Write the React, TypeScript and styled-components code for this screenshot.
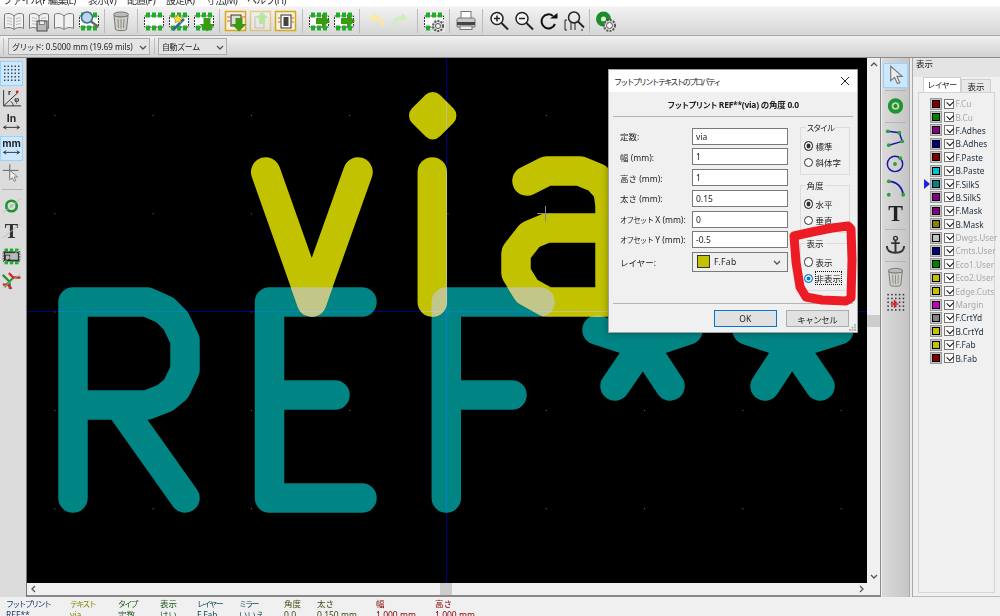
import React from 'react'
import styled, { createGlobalStyle } from 'styled-components'

const FONT = `"Noto Sans", "Noto Sans CJK JP", sans-serif`

const GlobalStyle = createGlobalStyle`
  html, body {
    margin: 0;
    padding: 0;
    background: #f0f0f0;
  }
  * {
    box-sizing: border-box;
  }
`

const Page = styled.div`
  width: 1000px;
  height: 616px;
  overflow: hidden;
  display: flex;
  flex-direction: column;
  font-family: ${FONT};
  color: #222;
  background: #f0f0f0;
`

const Kana = styled.span<{ $size?: number; $track?: number }>`
  font-size: ${p => p.$size ?? 7.5}px;
  letter-spacing: ${p => p.$track ?? -0.9}px;
`

const MenuBar = styled.div`
  height: 6px;
  flex: none;
  overflow: hidden;
  display: flex;
  align-items: flex-end;
  background: #fff;
`

const MenuItem = styled.div<{ $width: number }>`
  width: ${p => p.$width}px;
  flex: none;
  font-size: 10px;
  line-height: 14px;
  letter-spacing: -0.8px;
  color: #333;
  padding-left: 3px;
  margin-bottom: -1px;
  white-space: nowrap;
  overflow: hidden;
`

const MainToolbar = styled.div`
  height: 30px;
  flex: none;
  display: flex;
  align-items: center;
  padding-left: 1px;
  border-top: 1px solid #f8f8f8;
  border-bottom: 1px solid #a8a8a8;
  background: linear-gradient(#f2f2f2, #d6d6d6);
`

const ToolSlot = styled.div`
  width: 25px;
  height: 24px;
  flex: none;
  display: flex;
  align-items: center;
  justify-content: center;
`

const ToolGap = styled.div`
  width: 7.5px;
  height: 24px;
  flex: none;
  display: flex;
  justify-content: center;

  &::after {
    content: '';
    width: 1px;
    background: #bcbcbc;
  }
`

const SelectBar = styled.div`
  height: 22px;
  flex: none;
  display: flex;
  align-items: center;
  padding-left: 3px;
  border-bottom: 1px solid #8c8c8c;
  background: linear-gradient(#f0f0f0, #d2d2d2);
`

const BarGrip = styled.div<{ $margin: number }>`
  width: 1px;
  height: 17px;
  flex: none;
  margin: 0 ${p => p.$margin}px 0 0;
  background: #bdbdbd;
`

const Combo = styled.div<{ $width: number }>`
  width: ${p => p.$width}px;
  height: 17px;
  flex: none;
  display: flex;
  align-items: center;
  justify-content: space-between;
  padding: 0 2px 0 3px;
  margin-right: 4px;
  border: 1px solid #adadad;
  background: #e4e4e4;
  font-size: 8px;
  white-space: nowrap;
  color: #222;
`

const Main = styled.div`
  flex: 1;
  min-height: 0;
  display: flex;
`

const LeftBar = styled.div`
  width: 27px;
  flex: none;
  display: flex;
  flex-direction: column;
  padding-top: 2.5px;
  border-right: 1px solid #777;
  background: #dcdcdc;
`

const VTool = styled.div<{ $active?: boolean; $wide?: boolean }>`
  width: ${p => (p.$wide ? 25 : 23)}px;
  height: 25px;
  flex: none;
  display: flex;
  align-items: center;
  justify-content: center;
  border: 1px solid ${p => (p.$active ? '#99d1ff' : 'transparent')};
  background: ${p => (p.$active ? '#cce8ff' : 'transparent')};
`

const VGap = styled.div<{ $height: number }>`
  height: ${p => p.$height}px;
  width: 21px;
  margin-left: 2px;
  flex: none;
  display: flex;
  align-items: center;

  &::after {
    content: '';
    width: 100%;
    height: 1px;
    background: #b4b4b4;
  }
`

const CanvasColumn = styled.div`
  width: 854px;
  flex: none;
  display: flex;
  flex-direction: column;
  border-right: 1px solid #888;
  border-bottom: 2px solid #888;
  background: #f0f0f0;
`

const CanvasRow = styled.div`
  height: 525px;
  flex: none;
  display: flex;
`

const CanvasArea = styled.div`
  position: relative;
  width: 840px;
  height: 525px;
  flex: none;
  background: #000;
`

const Board = styled.svg`
  display: block;
  width: 840px;
  height: 525px;
`

const Axis = styled.path`
  stroke: #000084;
  stroke-width: 1;
  fill: none;
  mix-blend-mode: screen;
`

const VScroll = styled.div`
  flex: 1;
  display: flex;
  flex-direction: column;
  align-items: center;
  justify-content: space-between;
  padding: 3px 0;
  position: relative;
  font-size: 0;
`

const VThumb = styled.div`
  position: absolute;
  left: 0;
  right: 0;
  top: 257px;
  height: 12px;
  background: #cdcdcd;
`

const HScroll = styled.div`
  position: relative;
  height: 12px;
  flex: none;
  display: flex;
  align-items: center;
  justify-content: space-between;
  padding: 0 15px 0 3px;
`

const HThumb = styled.div`
  position: absolute;
  left: 413px;
  top: 0;
  bottom: 0;
  width: 12px;
  background: #cdcdcd;
`

const RightBar = styled.div`
  width: 27px;
  margin-left: 1px;
  flex: none;
  display: flex;
  flex-direction: column;
  padding: 4.5px 0 0 1px;
  background: linear-gradient(90deg, #dadada, #c6c6c6);
`

const Sash = styled.div`
  width: 4px;
  flex: none;
  border-left: 1px solid #a8a8a8;
  border-right: 1px solid #a8a8a8;
  background: #ececec;
`

const LayerPanel = styled.div`
  flex: 1;
  min-width: 0;
  display: flex;
  flex-direction: column;
  background: #f0f0f0;
  border-bottom: 1px solid #bbb;
`

const PanelTitle = styled.div`
  height: 19px;
  flex: none;
  padding-left: 3px;
  font-size: 8.5px;
  line-height: 11px;
  background: #e4e4e4;
`

const TabRow = styled.div`
  height: 15px;
  flex: none;
  display: flex;
  align-items: flex-end;
  padding-left: 10px;
`

const Tab = styled.div<{ $active?: boolean }>`
  width: ${p => (p.$active ? 38 : 30)}px;
  height: ${p => (p.$active ? 15 : 13)}px;
  flex: none;
  font-size: 8.5px;
  line-height: 13px;
  text-align: center;
  border: 1px solid #d0d0d0;
  border-bottom: none;
  background: ${p => (p.$active ? '#fff' : '#e8e8e8')};
`

const TabBody = styled.div`
  flex: 1;
  margin: 0 5px 3px 5px;
  padding: 4px 0 0 11px;
  border: 1px solid #d4d4d4;
  display: flex;
  flex-direction: column;
`

const LayerRow = styled.div`
  position: relative;
  height: 13.4px;
  flex: none;
  display: flex;
  align-items: center;
`

const Marker = styled.div`
  position: absolute;
  left: -6px;
  top: 2px;
  width: 0;
  height: 0;
  border-top: 5px solid transparent;
  border-bottom: 5px solid transparent;
  border-left: 6px solid #2020e8;
`

const Swatch = styled.div<{ $color: string }>`
  width: 12px;
  height: 12px;
  flex: none;
  border: 2px solid #c4c4c4;
  background: ${p => p.$color};
  outline: 1px solid #9a9a9a;
  outline-offset: -1px;
  box-shadow: inset 0 0 0 1px #000;
`

const Check = styled.div`
  position: relative;
  width: 10px;
  height: 10px;
  flex: none;
  margin-left: 2px;
  border: 1px solid #777;
  background: #fff;

  &::after {
    content: '';
    position: absolute;
    left: 1.5px;
    top: 0.5px;
    width: 5px;
    height: 3.5px;
    border-left: 1px solid #111;
    border-bottom: 1px solid #111;
    transform: rotate(-45deg);
  }
`

const LayerName = styled.div<{ $muted: boolean }>`
  margin-left: 1.5px;
  font-size: 8.3px;
  white-space: nowrap;
  color: ${p => (p.$muted ? '#a8a8a8' : '#1c2c3c')};
`

const StatusBar = styled.div`
  height: 19px;
  flex: none;
  overflow: hidden;
  display: flex;
  padding: 2px 0 0 6px;
  background: #f0f0f0;
`

const StatusColumn = styled.div<{ $width: number; $color: string }>`
  width: ${p => p.$width}px;
  flex: none;
  font-size: 8.5px;
  line-height: 10.5px;
  white-space: nowrap;
  color: ${p => p.$color};
`

const Dialog = styled.div`
  position: absolute;
  left: 581px;
  top: 11px;
  width: 250px;
  height: 264px;
  display: flex;
  flex-direction: column;
  border: 1px solid #a0a0a0;
  background: #f0f0f0;
  box-shadow: 0 0 7px rgba(0, 0, 0, 0.35);
  font-size: 8.5px;
`

const TitleBar = styled.div`
  height: 22px;
  flex: none;
  display: flex;
  align-items: center;
  justify-content: space-between;
  padding: 0 7px 0 5px;
  background: #fff;
  font-size: 8.5px;
`

const Subtitle = styled.div`
  height: 24px;
  flex: none;
  display: flex;
  align-items: center;
  justify-content: center;
  font-size: 8.5px;
  letter-spacing: -0.25px;
  font-weight: 700;
`

const Rule = styled.div`
  height: 1px;
  flex: none;
  margin: 0 4px;
  background: #b4b4b4;
`

const DialogBody = styled.div`
  flex: 1;
  display: flex;
  padding: 5px 0 0 11px;
`

const FieldGrid = styled.div`
  width: 168px;
  flex: none;
  margin-top: 5.7px;
  display: grid;
  grid-template-columns: 72px 96px;
  grid-auto-rows: min-content;
  row-gap: 3.75px;
  align-items: center;
`

const FieldLabel = styled.div`
  white-space: nowrap;
  color: #222;
`

const Field = styled.div`
  height: 17px;
  display: flex;
  align-items: center;
  padding-left: 3px;
  border: 1px solid #7a7a7a;
  background: #fff;
  font-size: 8.5px;
`

const LayerSelect = styled.div`
  height: 19.5px;
  display: flex;
  align-items: center;
  justify-content: space-between;
  padding: 0 6px 0 4px;
  border: 1px solid #7a7a7a;
  background: #efefef;
`

const LayerChip = styled.span`
  display: flex;
  align-items: center;
  gap: 4px;
  letter-spacing: 0.4px;

  &::before {
    content: '';
    width: 11px;
    height: 11px;
    border: 1px solid #333;
    background: #c2c200;
  }
`

const GroupColumn = styled.div`
  width: 50px;
  margin-left: 11.5px;
  display: flex;
  flex-direction: column;
  gap: 5px;
`

const Group = styled.fieldset`
  height: 53px;
  margin: 0;
  padding: 4.6px 0 0 3px;
  min-width: 0;
  border: 1px solid #dcdcdc;
`

const GroupTitle = styled.legend`
  margin-left: 2px;
  padding: 0 1px;
  font-size: 8.5px;
  line-height: 11px;
`

const RadioRow = styled.div`
  height: 16.5px;
  display: flex;
  align-items: center;
  gap: 2.5px;
`

const RadioDot = styled.span<{ $checked?: boolean; $focus?: boolean }>`
  width: 9.5px;
  height: 9.5px;
  flex: none;
  border-radius: 50%;
  border: 1px solid ${p => (p.$focus ? '#0078d7' : '#333')};
  background: ${p => (p.$focus ? '#0078d7' : p.$checked ? '#333' : '#fff')};
  box-shadow: inset 0 0 0 1.5px #fff;
`

const RadioText = styled.span<{ $focus?: boolean }>`
  white-space: nowrap;
  outline: ${p => (p.$focus ? '1px dotted #111' : 'none')};
`

const DialogFooter = styled.div`
  flex: none;
  display: flex;
  flex-direction: column;
`

const ButtonRow = styled.div`
  position: relative;
  display: flex;
  justify-content: flex-end;
  gap: 8.5px;
  padding: 6px 8px 5px 0;
`

const DialogButton = styled.div<{ $primary?: boolean }>`
  width: 63.5px;
  height: 17px;
  display: flex;
  align-items: center;
  justify-content: center;
  border: ${p => (p.$primary ? '1.5px solid #0078d7' : '1px solid #adadad')};
  background: #e1e1e1;
  font-size: 8.5px;
`

const Grip = styled.svg`
  position: absolute;
  right: 1px;
  bottom: 1px;
`

const Scribble = styled.svg`
  position: absolute;
  left: 0;
  top: 0;
  width: 840px;
  height: 525px;
  pointer-events: none;
`

const Chevron = ({ dir = 'down', size = 8, color = '#555', w = 1.3 }: { dir?: 'down' | 'up' | 'left' | 'right'; size?: number; color?: string; w?: number }) => {
  const paths = {
    down: 'M1 3l3 3 3-3',
    up: 'M1 5l3-3 3 3',
    left: 'M5 1L2 4l3 3',
    right: 'M3 1l3 3-3 3',
  }
  return (
    <svg width={size} height={size} viewBox="0 0 8 8" fill="none">
      <path d={paths[dir]} stroke={color} strokeWidth={w} />
    </svg>
  )
}

const Icon = ({ children }: { children: React.ReactNode }) => (
  <svg width="24" height="24" viewBox="0 0 24 24" fill="none">
    {children}
  </svg>
)

const ChipArt = ({ faded }: { faded?: boolean }) => (
  <g opacity={faded ? 0.35 : 1}>
    <rect x="2.5" y="7" width="19" height="11" fill="#fff" stroke="#333" strokeDasharray="2 1" />
    {[4, 10, 16].map(x => (
      <React.Fragment key={x}>
        <rect x={x} y="3.5" width="4" height="5" fill="#1fae2a" />
        <rect x={x} y="16.5" width="4" height="5" fill="#1fae2a" />
      </React.Fragment>
    ))}
  </g>
)

const ArrowDown = ({ faded }: { faded?: boolean }) => (
  <path d="M9.5 9h7v6h4l-7.5 7.5L5.5 15h4z" transform="translate(2 0)" fill={faded ? '#b6e6a0' : '#3c9a12'} />
)

const ArrowRight = () => <path d="M9 9h6V4.500l8 7.500-8 7.500V15H9z" fill="#3c9a12" />

const YellowFrame = () => <rect x="1.500" y="2.500" width="20" height="19" fill="#f6f0e0" stroke="#d8a818" strokeWidth="1.500" />

const Gear = ({ x = 16, y = 17, r = 5 }: { x?: number; y?: number; r?: number }) => (
  <g>
    <circle cx={x} cy={y} r={r} fill="#ddd" stroke="#555" strokeWidth="2" strokeDasharray="2 1.200" />
    <circle cx={x} cy={y} r={r - 2.500} fill="#f4f4f4" stroke="#555" />
  </g>
)

const BookArt = ({ lines = true }: { lines?: boolean }) => (
  <g>
    <path d="M12 7C9 4 5 4 2.500 5.500v14c2.500-1.500 6.500-1.500 9.500 1 3-2.500 7-2.500 9.500-1v-14C19 4 15 4 12 7z" fill="#f1f1f1" stroke="#777" />
    <path d="M12 7v13.500" stroke="#777" />
    {lines && <path d="M5 9c2-.5 3.500 0 5 1M5 12c2-.5 3.500 0 5 1M5 15c2-.5 3.500 0 5 1M14 10c1.500-1 3-1.500 5-1M14 13c1.500-1 3-1.500 5-1M14 16c1.500-1 3-1.500 5-1" stroke="#b4b4b4" />}
  </g>
)

const TrashArt = () => (
  <g>
    <ellipse cx="12" cy="5.500" rx="7.500" ry="2.500" fill="#bbb" stroke="#777" />
    <path d="M5 6.500l1.500 14c1 1.500 10 1.500 11 0L19 6.500c-2 2-12 2-14 0z" fill="#cfcfc8" stroke="#777" />
    <path d="M9 10l.5 9M12 10v9.500M15 10l-.5 9" stroke="#8b8b84" />
  </g>
)

const MagnifierArt = ({ sign }: { sign: 'plus' | 'minus' }) => (
  <g stroke="#222">
    <circle cx="10" cy="9.500" r="6" strokeWidth="1.500" fill="#f4f4f4" />
    <path d="M14.500 14l6.500 6.500" strokeWidth="2" />
    <path d={sign === 'plus' ? 'M7 9.500h6M10 6.500v6' : 'M7 9.500h6'} strokeWidth="1.500" />
  </g>
)

const topTools: (React.ReactNode | null)[] = [
  <Icon><BookArt /></Icon>,
  <Icon>
    <BookArt />
    <rect x="10" y="12" width="10" height="10" fill="#bbb" stroke="#444" />
    <rect x="12.500" y="12" width="5" height="3.500" fill="#eee" stroke="#444" strokeWidth=".6" />
  </Icon>,
  <Icon><BookArt lines={false} /></Icon>,
  <Icon>
    <ChipArt />
    <circle cx="10" cy="8.500" r="5.500" fill="#bcd8ee" stroke="#3a6a94" strokeWidth="1.500" />
    <path d="M14 12.500l7 5" stroke="#666" strokeWidth="2.200" />
  </Icon>,
  null,
  <Icon><TrashArt /></Icon>,
  null,
  <Icon><ChipArt /></Icon>,
  <Icon>
    <ChipArt />
    <path d="M6 21L17 10" stroke="#35689c" strokeWidth="2.500" />
    <path d="M11 5l1.500 3 3 .5-2 2.500.5 3-3-1.500-3 1.500.5-3-2-2.500 3-.5z" fill="#f4e23a" stroke="#a08a10" strokeWidth=".6" />
  </Icon>,
  <Icon><ChipArt /><ArrowDown /></Icon>,
  null,
  <Icon><YellowFrame /><rect x="7" y="6" width="10" height="11" fill="#ddd" stroke="#333" /><path d="M3 8h4M3 12h4M17 8h4" stroke="#d06a20" /><ArrowDown /></Icon>,
  <Icon><g opacity=".45"><YellowFrame /><rect x="6" y="8" width="9" height="11" fill="#eee" stroke="#999" /></g><path d="M13 3l6 6h-3v6h-6V9H7z" fill="#b6e6a0" /></Icon>,
  <Icon><YellowFrame /><rect x="7" y="6" width="10" height="13" fill="#fff" stroke="#333" /><rect x="9.500" y="8" width="5" height="9" fill="#444" /><path d="M4 9h3M4 13h3M17 9h3M17 13h3" stroke="#d06a20" /></Icon>,
  null,
  <Icon><ChipArt /><ArrowRight /></Icon>,
  <Icon><ChipArt /><ArrowRight /></Icon>,
  null,
  <Icon><path d="M18 17c0-4-3-6.500-7-6.500V14L4.500 8.500 11 3v3.500c6 0 10 4 10 10.500l-1.500 3z" transform="matrix(.9 0 0 .9 1 1)" fill="#fbe9a0" /></Icon>,
  <Icon><path d="M6 17c0-4 3-6.500 7-6.500V14l6.500-5.500L13 3v3.500C7 6.500 3 10.500 3 17l1.500 3z" transform="matrix(.9 0 0 .9 1 1)" fill="#cdeec0" /></Icon>,
  null,
  <Icon><ChipArt /><rect x="10" y="10" width="13" height="13" fill="#eee" opacity=".7" /><Gear /></Icon>,
  null,
  <Icon>
    <rect x="7" y="2.500" width="10" height="7" fill="#fff" stroke="#777" />
    <path d="M3 10.500c0-1 1-1.500 2-1.500h14c1 0 2 .5 2 1.500V18H3z" fill="#c9c9c9" stroke="#777" />
    <rect x="3" y="13" width="18" height="3" fill="#444" />
    <rect x="6" y="17" width="12" height="3.500" fill="#eee" stroke="#777" />
  </Icon>,
  null,
  <Icon><MagnifierArt sign="plus" /></Icon>,
  <Icon><MagnifierArt sign="minus" /></Icon>,
  <Icon>
    <path d="M18 15a7 7 0 1 1-2-8" stroke="#111" strokeWidth="2" />
    <path d="M13 9.500h7.500V4z" fill="#111" />
  </Icon>,
  <Icon>
    <path d="M5 11H3v10h2M19 21h2" stroke="#222" />
    <circle cx="12" cy="8.500" r="5.500" stroke="#222" strokeWidth="1.500" />
    <path d="M9 13v8M13 13v8" stroke="#222" />
    <path d="M16 12.500l6 6" stroke="#222" strokeWidth="1.800" />
  </Icon>,
  null,
  <Icon>
    <circle cx="9.500" cy="10" r="7.500" fill="#1d8c2c" />
    <circle cx="9.500" cy="10" r="2.500" fill="#d8f0d0" />
    <Gear x={15.500} y={16.500} r={5.500} />
  </Icon>,
]

const GridDots = ({ marked }: { marked?: boolean }) => (
  <Icon>
    {[0, 1, 2, 3, 4].map(r =>
      [0, 1, 2, 3, 4].map(c => (
        <rect key={`${r}-${c}`} x={3.500 + c * 4} y={3.500 + r * 4} width="1.600" height="1.600" fill="#333" />
      )),
    )}
    {marked && <path d="M7 14h8M11 10v8" stroke="#e01818" strokeWidth="1.600" />}
  </Icon>
)

const UnitIcon = ({ label, size }: { label: string; size: number }) => (
  <Icon>
    <text x="12" y="11" textAnchor="middle" fontFamily='"Liberation Sans", sans-serif' fontWeight="700" fontSize={size} fill="#222">{label}</text>
    <path d="M3 17h18M3 17l3-2M3 17l3 2M21 17l-3-2M21 17l-3 2" stroke="#222" />
  </Icon>
)

const Hatch = () => <path d="M2 20L22 4" stroke="#bbb" strokeWidth="1" />

const ViaArt = ({ hatch }: { hatch?: boolean }) => (
  <>
    <circle cx="12" cy="12" r="6" stroke="#1d9430" strokeWidth={hatch ? 3 : 4} fill={hatch ? 'none' : '#b8d8b0'} />
    <circle cx="12" cy="12" r="2" fill={hatch ? '#9ccf9c' : '#208830'} />
  </>
)

const BigT = ({ color = '#222' }: { color?: string }) => (
  <text x="12" y="20" textAnchor="middle" fontFamily='"Liberation Serif", serif' fontWeight="700" fontSize="23" fill={color}>T</text>
)

const leftTools: { art: React.ReactNode; active?: boolean }[] = [
  { art: <GridDots />, active: true },
  {
    art: (
      <Icon>
        <path d="M3 3v18h20M3 21L19 6M14 21c0-2-1-4-3-5" stroke="#222" />
        <circle cx="18.500" cy="5" r="1.600" fill="#e01818" />
        <text x="8" y="9" fontFamily='"Liberation Sans", sans-serif' fontWeight="700" fontSize="9" fill="#222">r</text>
        <text x="15" y="17" fontFamily='"Liberation Serif", serif' fontWeight="700" fontSize="9" fill="#222">φ</text>
      </Icon>
    ),
  },
  { art: <UnitIcon label="In" size={12} /> },
  { art: <UnitIcon label="mm" size={12} />, active: true },
  {
    art: (
      <Icon>
        <path d="M2 9h18M10 2v16" stroke="#555" />
        <path d="M10 9v11l3-2.500 2 4 2-1-2-4h4z" fill="#eee" stroke="#777" />
      </Icon>
    ),
  },
]

const leftTools2: React.ReactNode[] = [
  <Icon><ViaArt hatch /><Hatch /></Icon>,
  <Icon><BigT color="#333" /><Hatch /></Icon>,
  <Icon>
    <ChipArt />
    <rect x="4" y="8" width="16" height="9" fill="#bbb" stroke="#333" strokeWidth="1.500" />
    <rect x="5" y="11" width="5" height="5" fill="none" stroke="#333" />
    <Hatch />
  </Icon>,
  <Icon>
    <path d="M2 5l8 8v8M22 8h-8L4 19" stroke="#1d9430" strokeWidth="2.500" />
    <path d="M9 3l5 5h8M2 16h6l4 5" stroke="#d82020" strokeWidth="2.500" />
    <Hatch />
  </Icon>,
]

const NodeDot = ({ cx, cy }: { cx: number; cy: number }) => <circle cx={cx} cy={cy} r="2" fill="#2f9e3c" />

const rightGroups: { art: React.ReactNode; active?: boolean }[][] = [
  [
    {
      active: true,
      art: (
        <Icon>
          <path d="M7 3v15l4-3.500 3 6.500 2.500-1-3-6.500h5.500z" fill="#eee" stroke="#777" strokeWidth="1.200" />
        </Icon>
      ),
    },
  ],
  [{ art: <Icon><ViaArt /></Icon> }],
  [
    {
      art: (
        <Icon>
          <path d="M4 5l12 1.500 3 9-14 4" stroke="#1414a8" strokeWidth="1.500" />
          <NodeDot cx={4} cy={5} /><NodeDot cx={16} cy={6.500} /><NodeDot cx={19} cy={15.500} /><NodeDot cx={5} cy={19.500} />
        </Icon>
      ),
    },
    {
      art: (
        <Icon>
          <circle cx="11.500" cy="13" r="8" stroke="#1414a8" strokeWidth="1.500" />
          <NodeDot cx={11.500} cy={13} /><NodeDot cx={17} cy={7} />
        </Icon>
      ),
    },
    {
      art: (
        <Icon>
          <path d="M5 5c8 0 14 6 15 14" stroke="#1414a8" strokeWidth="1.800" />
          <NodeDot cx={5} cy={5} /><NodeDot cx={5} cy={19} /><NodeDot cx={20} cy={19} />
        </Icon>
      ),
    },
    { art: <Icon><BigT /></Icon> },
  ],
  [
    {
      art: (
        <Icon>
          <circle cx="12" cy="5" r="2" stroke="#333" strokeWidth="1.500" />
          <path d="M12 7v13M7.500 10h9M3 13c0 5 4 7 9 7s9-2 9-7" stroke="#333" strokeWidth="2" />
        </Icon>
      ),
    },
  ],
  [
    { art: <Icon><TrashArt /></Icon> },
    { art: <GridDots marked /> },
  ],
]

const layers: { name: string; color: string; muted: boolean; current?: boolean }[] = [
  { name: 'F.Cu', color: '#840000', muted: true },
  { name: 'B.Cu', color: '#008400', muted: true },
  { name: 'F.Adhes', color: '#840084', muted: false },
  { name: 'B.Adhes', color: '#000084', muted: false },
  { name: 'F.Paste', color: '#840000', muted: false },
  { name: 'B.Paste', color: '#00c2c2', muted: false },
  { name: 'F.SilkS', color: '#008484', muted: false, current: true },
  { name: 'B.SilkS', color: '#840084', muted: false },
  { name: 'F.Mask', color: '#840084', muted: false },
  { name: 'B.Mask', color: '#848400', muted: false },
  { name: 'Dwgs.User', color: '#c2c2c2', muted: true },
  { name: 'Cmts.User', color: '#000084', muted: true },
  { name: 'Eco1.User', color: '#008400', muted: true },
  { name: 'Eco2.User', color: '#c2c200', muted: true },
  { name: 'Edge.Cuts', color: '#c2c200', muted: true },
  { name: 'Margin', color: '#c200c2', muted: true },
  { name: 'F.CrtYd', color: '#848484', muted: false },
  { name: 'B.CrtYd', color: '#c2c200', muted: false },
  { name: 'F.Fab', color: '#c2c200', muted: false },
  { name: 'B.Fab', color: '#840000', muted: false },
]

const statusColumns = [
  { title: 'フットプリント', value: 'REF**', width: 64, color: '#1a3a6a', kana: true },
  { title: 'テキスト', value: 'via', width: 48, color: '#848400', kana: true },
  { title: 'タイプ', value: '定数', width: 42, color: '#1a5a1a', kana: true },
  { title: '表示', value: 'はい', width: 37, color: '#1a5a1a' },
  { title: 'レイヤー', value: 'F.Fab', width: 42, color: '#0a4a5a', kana: true },
  { title: 'ミラー', value: 'いいえ', width: 45, color: '#0a4a5a', kana: true },
  { title: '角度', value: '0.0', width: 33, color: '#3a4a10' },
  { title: '太さ', value: '0.150 mm', width: 59, color: '#3a4a10' },
  { title: '幅', value: '1.000 mm', width: 59, color: '#840000' },
  { title: '高さ', value: '1.000 mm', width: 70, color: '#840000' },
]

const menus = [
  { label: 'ファイル(F)', width: 45 },
  { label: '編集(E)', width: 40 },
  { label: '表示(V)', width: 39 },
  { label: '配置(P)', width: 39 },
  { label: '設定(R)', width: 40 },
  { label: '寸法(M)', width: 41 },
  { label: 'ヘルプ(H)', width: 50 },
]

const fields: [React.ReactNode, string][] = [
  ['定数:', 'via'],
  ['幅 (mm):', '1'],
  ['高さ (mm):', '1'],
  ['太さ (mm):', '0.15'],
  [<><Kana>オフセット</Kana> X (mm):</>, '0'],
  [<><Kana>オフセット</Kana> Y (mm):</>, '-0.5'],
]

const groups: { title: React.ReactNode; key: string; options: { label: React.ReactNode; key: string; checked?: boolean; focus?: boolean }[] }[] = [
  { key: 'style', title: <Kana $size={8} $track={-1.2}>スタイル</Kana>, options: [{ key: 'a', label: '標準', checked: true }, { key: 'b', label: '斜体字' }] },
  { key: 'angle', title: '角度', options: [{ key: 'a', label: '水平', checked: true }, { key: 'b', label: '垂直' }] },
  { key: 'show', title: '表示', options: [{ key: 'a', label: '表示' }, { key: 'b', label: '非表示', focus: true }] },
]

const TEAL_PATHS = [
  'M73 498V302H147L165 310L176 321L185 340V370L176 389L165 398L147 405H73M119 405L185 498',
  'M362 302H269.500V498H362M269.500 395H335',
  'M540 302H446.300V498M446.300 395H512',
  'M643 345L597 330M643 345L615 386M643 345L670 386M643 345L688 330M643 345V300',
  'M792 345L747 330M792 345L765 386M792 345L820 386M792 345L839 330M792 345V300',
]

const YELLOW_PATHS = [
  'M265.700 172L311.700 302L358 172',
  'M432.300 172V302',
  'M527 181L546.700 171H580L597 178L608 190L610 205V302H546.700L527 291L516 273V253L530 235L546.700 228H610',
]

const gridX = [54.3, 152.6, 250.9, 349.2, 447.5, 545.8, 644.1, 742.4, 840.7]
const gridY = [115, 213.3, 311.6, 409.9, 508.2]

const App: React.FunctionComponent = () => {
  return (
    <Page>
      <GlobalStyle />
      <MenuBar>
        {menus.map(m => (
          <MenuItem key={m.label} $width={m.width}>{m.label}</MenuItem>
        ))}
      </MenuBar>
      <MainToolbar>
        {topTools.map((tool, i) =>
          tool ? <ToolSlot key={i}>{tool}</ToolSlot> : <ToolGap key={i} />,
        )}
      </MainToolbar>
      <SelectBar>
        <BarGrip $margin={4} />
        <Combo $width={142}>
          <span><Kana $size={8} $track={-0.6}>グリッド</Kana>: 0.5000 mm (19.69 mils)</span>
          <Chevron />
        </Combo>
        <BarGrip $margin={3} />
        <Combo $width={69}>
          <Kana $size={8} $track={-0.4}>自動ズーム</Kana>
          <Chevron />
        </Combo>
      </SelectBar>
      <Main>
        <LeftBar>
          {leftTools.map((t, i) => (
            <VTool key={i} $active={t.active}>{t.art}</VTool>
          ))}
          <VGap $height={8} />
          {leftTools2.map((art, i) => (
            <VTool key={i}>{art}</VTool>
          ))}
        </LeftBar>
        <CanvasColumn>
          <CanvasRow>
            <CanvasArea>
              <Board viewBox="27 58 840 525">
                <defs>
                  <mask id="tealMask" maskUnits="userSpaceOnUse" x="27" y="58" width="840" height="525">
                    {TEAL_PATHS.map(d => (
                      <path key={d} d={d} fill="none" stroke="#fff" strokeWidth="29.500" strokeLinecap="round" strokeLinejoin="round" />
                    ))}
                  </mask>
                </defs>
                {gridY.map(y =>
                  gridX.map(x => <rect key={`${x}-${y}`} x={x} y={y} width="1" height="1" fill="#6e6e6e" />),
                )}
                <g fill="none" stroke="#008484" strokeWidth="29.500" strokeLinecap="round" strokeLinejoin="round">
                  {TEAL_PATHS.map(d => <path key={d} d={d} />)}
                </g>
                <g fill="none" stroke="#c2c200" strokeWidth="29.500" strokeLinecap="round" strokeLinejoin="round">
                  {YELLOW_PATHS.map(d => <path key={d} d={d} />)}
                </g>
                <path d="M432.700 102.400L446 115.700L432.700 129L419.400 115.700Z" fill="#c2c200" stroke="#c2c200" strokeWidth="20.800" strokeLinejoin="round" />
                <g mask="url(#tealMask)" fill="none" stroke="#c2c688" strokeWidth="29.500" strokeLinecap="round" strokeLinejoin="round">
                  {YELLOW_PATHS.map(d => <path key={d} d={d} />)}
                </g>
                <Axis d="M446.500 58V583M27 311.500H867" />
                <path d="M537 213.500H553M545.500 206V222" stroke="#8a8a8a" strokeWidth="1" />
              </Board>
              <Dialog>
                <TitleBar>
                  <Kana $size={8} $track={-1.75}>フットプリント テキストのプロパティ</Kana>
                  <svg width="10" height="10" viewBox="0 0 10 10">
                    <path d="M1 1l8 8M9 1l-8 8" stroke="#222" />
                  </svg>
                </TitleBar>
                <Subtitle><span><Kana $size={8} $track={-0.9}>フットプリント</Kana> REF**(via) の角度 0.0</span></Subtitle>
                <Rule />
                <DialogBody>
                  <FieldGrid>
                    {fields.map(([label, value], i) => (
                      <React.Fragment key={i}>
                        <FieldLabel>{label}</FieldLabel>
                        <Field>{value}</Field>
                      </React.Fragment>
                    ))}
                    <FieldLabel>レイヤー:</FieldLabel>
                    <LayerSelect>
                      <LayerChip>F.Fab</LayerChip>
                      <Chevron />
                    </LayerSelect>
                  </FieldGrid>
                  <GroupColumn>
                    {groups.map(g => (
                      <Group key={g.key}>
                        <GroupTitle>{g.title}</GroupTitle>
                        {g.options.map(o => (
                          <RadioRow key={o.key}>
                            <RadioDot $checked={o.checked} $focus={o.focus} />
                            <RadioText $focus={o.focus}>{o.label}</RadioText>
                          </RadioRow>
                        ))}
                      </Group>
                    ))}
                  </GroupColumn>
                </DialogBody>
                <DialogFooter>
                  <Rule />
                  <ButtonRow>
                    <DialogButton $primary>OK</DialogButton>
                    <DialogButton><Kana $size={8.5} $track={-0.5}>キャンセル</Kana></DialogButton>
                    <Grip width="7" height="7" viewBox="0 0 7 7">
                      <path d="M5 0h2v2H5zM2.500 2.500h2v2h-2zM5 2.500h2v2H5zM0 5h2v2H0zM2.500 5h2v2h-2zM5 5h2v2H5z" fill="#b8b8b8" />
                    </Grip>
                  </ButtonRow>
                </DialogFooter>
              </Dialog>
              <Scribble viewBox="27 58 840 525">
                <path
                  d="M794 236L812 232L832 228L848 226L851 229L852 260L851 298L846 301L822 300L806 297L800 287L796 262L794 236"
                  fill="none"
                  stroke="#ed1c24"
                  strokeWidth="9"
                  strokeLinecap="round"
                  strokeLinejoin="round"
                />
              </Scribble>
            </CanvasArea>
            <VScroll>
              <VThumb />
              <Chevron dir="up" />
              <Chevron dir="down" />
            </VScroll>
          </CanvasRow>
          <HScroll>
            <HThumb />
            <Chevron dir="left" />
            <Chevron dir="right" />
          </HScroll>
        </CanvasColumn>
        <RightBar>
          {rightGroups.map((group, i) => (
            <React.Fragment key={i}>
              {i > 0 && <VGap $height={i === 1 ? 6 : 7} />}
              {group.map((t, j) => (
                <VTool key={j} $active={t.active} $wide>{t.art}</VTool>
              ))}
            </React.Fragment>
          ))}
        </RightBar>
        <Sash />
        <LayerPanel>
          <PanelTitle>表示</PanelTitle>
          <TabRow>
            <Tab $active><Kana $size={8} $track={-0.6}>レイヤー</Kana></Tab>
            <Tab>表示</Tab>
          </TabRow>
          <TabBody>
            {layers.map(l => (
              <LayerRow key={l.name}>
                {l.current && <Marker />}
                <Swatch $color={l.color} />
                <Check />
                <LayerName $muted={l.muted}>{l.name}</LayerName>
              </LayerRow>
            ))}
          </TabBody>
        </LayerPanel>
      </Main>
      <StatusBar>
        {statusColumns.map(c => (
          <StatusColumn key={c.title} $width={c.width} $color={c.color}>
            <div>{c.kana ? <Kana $size={8} $track={-1.7}>{c.title}</Kana> : c.title}</div>
            <div>{c.value}</div>
          </StatusColumn>
        ))}
      </StatusBar>
    </Page>
  )
}

export default App
